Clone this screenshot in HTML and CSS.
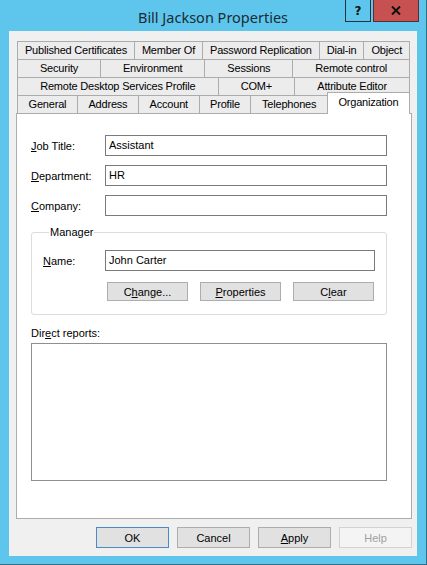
FILE: index.html
```html
<!DOCTYPE html>
<html lang="en">
<head>
    <meta charset="UTF-8">
    <title>Bill Jackson Properties</title>
    <link rel="stylesheet" href="styles.css">
</head>
<body>
    <div class="window">
        <div class="titlebar">
            <span class="title">Bill Jackson Properties</span>
            <div class="caption-buttons">
                <span class="cap-btn help">?</span>
                <span class="cap-btn close">
                    <svg width="10" height="9" viewBox="0 0 10 9">
                        <path d="M1 0.5 L9 8.5 M9 0.5 L1 8.5" stroke="#111" stroke-width="2" fill="none"/>
                    </svg>
                </span>
            </div>
        </div>

        <div class="client">
            <div class="tabs">
                <div class="tab-row">
                    <span class="tab">Published Certificates</span>
                    <span class="tab">Member Of</span>
                    <span class="tab">Password Replication</span>
                    <span class="tab">Dial-in</span>
                    <span class="tab">Object</span>
                </div>
                <div class="tab-row">
                    <span class="tab">Security</span>
                    <span class="tab">Environment</span>
                    <span class="tab">Sessions</span>
                    <span class="tab">Remote control</span>
                </div>
                <div class="tab-row">
                    <span class="tab">Remote Desktop Services Profile</span>
                    <span class="tab">COM+</span>
                    <span class="tab">Attribute Editor</span>
                </div>
                <div class="tab-row">
                    <span class="tab">General</span>
                    <span class="tab">Address</span>
                    <span class="tab">Account</span>
                    <span class="tab">Profile</span>
                    <span class="tab">Telephones</span>
                    <span class="tab selected">Organization</span>
                </div>
            </div>

            <div class="panel">
                <div class="fields">
                    <label class="field-label"><u>J</u>ob Title:</label>
                    <div class="textbox">Assistant</div>
                    <label class="field-label"><u>D</u>epartment:</label>
                    <div class="textbox">HR</div>
                    <label class="field-label"><u>C</u>ompany:</label>
                    <div class="textbox"></div>
                </div>

                <fieldset class="groupbox">
                    <legend>Manager</legend>
                    <div class="name-row">
                        <label class="field-label"><u>N</u>ame:</label>
                        <div class="textbox">John Carter</div>
                    </div>
                    <div class="manager-buttons">
                        <button class="btn small">C<u>h</u>ange...</button>
                        <button class="btn small"><u>P</u>roperties</button>
                        <button class="btn small">C<u>l</u>ear</button>
                    </div>
                </fieldset>

                <div class="reports-label">Dir<u>e</u>ct reports:</div>
                <div class="listbox"></div>
            </div>

            <div class="dialog-buttons">
                <button class="btn default">OK</button>
                <button class="btn">Cancel</button>
                <button class="btn"><u>A</u>pply</button>
                <button class="btn disabled">Help</button>
            </div>
        </div>
    </div>
</body>
</html>
```

FILE: styles.css
```css
body {
    margin: 0;
    font-family: "Liberation Sans", Arial, sans-serif;
    font-size: 11px;
    color: #000;
}

.window {
    width: 427px;
    height: 565px;
    box-sizing: border-box;
    background-color: #5ec6ec;
    border-right: 1px solid #2f6f8c;
    border-bottom: 1px solid #2f6f8c;
    display: flex;
    flex-direction: column;
}

/* title bar */
.titlebar {
    height: 31px;
    display: grid;
    grid-template-columns: 1fr auto 1fr;
}

.title {
    grid-column: 2;
    align-self: center;
    font-family: "Noto Sans", sans-serif;
    font-size: 14.5px;
    color: #1b2b35;
    padding-top: 3px;
}

.caption-buttons {
    grid-column: 3;
    justify-self: end;
    align-self: start;
    display: flex;
    gap: 2px;
    margin-right: 7px;
}

.cap-btn {
    height: 22px;
    box-sizing: border-box;
    border: 1px solid #24343d;
    border-top: none;
    display: flex;
    align-items: center;
    justify-content: center;
}

.cap-btn.help {
    width: 26px;
    font-family: "DejaVu Sans", sans-serif;
    font-weight: bold;
    font-size: 12px;
    color: #111;
}

.cap-btn.close {
    width: 46px;
    background-color: #c75050;
    border-color: #5a2e2e;
}

/* dialog body */
.client {
    flex: 1;
    margin: 0 9px 8px 9px;
    background-color: #f0f0f0;
    padding: 10px 5px 8px 7px;
    display: flex;
    flex-direction: column;
}

.tabs {
    margin: 0 2px 0 1px;
}

.tab-row {
    display: flex;
    height: 18px;
}

.tab {
    flex: 1 1 auto;
    height: 18px;
    box-sizing: border-box;
    border-top: 1px solid #acacac;
    border-left: 1px solid #acacac;
    background-color: #ececec;
    text-align: center;
    line-height: 17px;
    white-space: nowrap;
    letter-spacing: -0.2px;
    padding: 0 4px;
}

.tab:last-child {
    border-right: 1px solid #acacac;
}

.tab.selected {
    position: relative;
    z-index: 1;
    height: 22px;
    margin-top: -3px;
    background-color: #fff;
    line-height: 19px;
}

.panel {
    flex: 1;
    background-color: #fff;
    border: 1px solid #acacac;
    padding: 21px 24px 0 14px;
}

.fields {
    display: grid;
    grid-template-columns: 74px 1fr;
    row-gap: 9px;
    align-items: center;
}

.textbox {
    height: 21px;
    box-sizing: border-box;
    border: 1px solid #7a7a7a;
    background-color: #fff;
    padding-left: 3px;
    line-height: 19px;
}

.groupbox {
    margin: 10px 0 0 0;
    border: 1px solid #dcdcdc;
    border-radius: 3px;
    padding: 11px 11px 13px 11px;
}

.groupbox legend {
    padding: 0 1px;
    margin-left: 6px;
    line-height: 13px;
}

.name-row {
    display: grid;
    grid-template-columns: 62px 1fr;
    align-items: center;
}

.name-row .textbox {
    height: 21px;
    line-height: 19px;
}

.manager-buttons {
    display: flex;
    gap: 12px;
    margin: 11px 0 0 64px;
}

.btn {
    width: 73px;
    height: 21px;
    box-sizing: border-box;
    font-family: "Liberation Sans", Arial, sans-serif;
    font-size: 11px;
    color: #000;
    background-color: #e1e1e1;
    border: 1px solid #adadad;
    padding: 0;
}

.btn.small {
    width: 81px;
    height: 19px;
}

.btn.default {
    border-color: #4c8ac4;
}

.btn.disabled {
    color: #a0a0a0;
    background-color: #f4f4f4;
    border-color: #d2d2d2;
}

.reports-label {
    margin-top: 12px;
    line-height: 13px;
}

.listbox {
    margin-top: 3px;
    height: 138px;
    box-sizing: border-box;
    border: 1px solid #8e8f8f;
    background-color: #fff;
}

.dialog-buttons {
    display: flex;
    justify-content: flex-end;
    gap: 8px;
    margin-top: 8px;
}
```
